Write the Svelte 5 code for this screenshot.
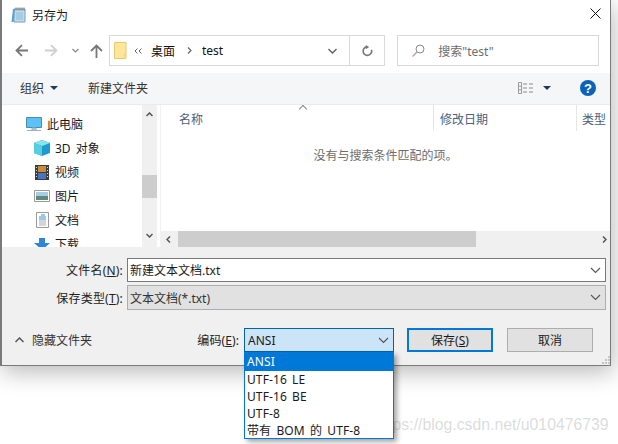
<script>
	const tree = [
		{ label: '3D 对象', icon: 'cube' },
		{ label: '视频', icon: 'film' },
		{ label: '图片', icon: 'pic' },
		{ label: '文档', icon: 'doc' },
		{ label: '下载', icon: 'down' }
	];
	const encodings = ['ANSI', 'UTF-16 LE', 'UTF-16 BE', 'UTF-8', '带有 BOM 的 UTF-8'];
</script>

{#snippet chevron(color)}
	<svg class="chev" width="11" height="7" viewBox="0 0 11 7"><path d="M1 1l4.500 4.500L10 1" fill="none" stroke={color} stroke-width="1.100" /></svg>
{/snippet}

<div class="page">
	<div class="dialog">
		<div class="title">
			<svg width="16" height="18" viewBox="0 0 16 18">
				<path d="M3 3h11v13H3z" fill="#bcdcf0" stroke="#7f9fb5" />
				<path d="M1.500 16l1.500-13" stroke="#5b9fc9" stroke-width="2" />
				<path d="M5 1.500v3M7 1.500v3M9 1.500v3M11 1.500v3M13 1.500v3" stroke="#777" />
				<path d="M5 7h7M5 9h7M5 11h7M5 13h7" stroke="#8fbcd6" />
			</svg>
			<span>另存为</span>
			<svg class="close" width="11" height="11" viewBox="0 0 11 11"><path d="M.500.500l10 10M10.500.500l-10 10" stroke="#111" stroke-width="1" /></svg>
		</div>

		<div class="nav">
			<svg class="arrow" width="13" height="13" viewBox="0 0 13 13"><path d="M13 6.500H2M7 1L1.500 6.500 7 12" fill="none" stroke="#777" stroke-width="1.800" /></svg>
			<svg class="arrow fwd" width="13" height="13" viewBox="0 0 13 13"><path d="M0 6.500h11M6 1l5.500 5.500L6 12" fill="none" stroke="#cfcfcf" stroke-width="1.800" /></svg>
			<svg class="hist" width="7" height="5" viewBox="0 0 7 5"><path d="M.500 1l3 3 3-3" fill="none" stroke="#888" stroke-width="1.200" /></svg>
			<svg class="arrow up" width="13" height="14" viewBox="0 0 13 14"><path d="M6.500 14V2M1 7l5.500-5.500L12 7" fill="none" stroke="#777" stroke-width="1.800" /></svg>
			<div class="address">
				<svg width="13" height="17" viewBox="0 0 13 17"><path d="M.500.500h11.500v16H.500z" fill="#ffe69a" stroke="#e8c968" /><path d="M10 11h2v5.500h-2z" fill="#f4d77f" /></svg>
				<svg class="crumbs" width="8" height="6" viewBox="0 0 8 6"><path d="M3.500.500L1 3l2.500 2.500M7.500.500L5 3l2.500 2.500" fill="none" stroke="#666" /></svg>
				<span class="crumb">桌面</span>
				<svg class="sep" width="5" height="7" viewBox="0 0 5 7"><path d="M1 .500l3 3-3 3" fill="none" stroke="#666" stroke-width="1.200" /></svg>
				<span class="crumb">test</span>
				<span class="spring"></span>
				<span class="addr-drop"><svg width="9" height="6" viewBox="0 0 9 6"><path d="M.500 1l4 4 4-4" fill="none" stroke="#666" stroke-width="1.500" /></svg></span>
				<span class="refresh">
					<svg width="11" height="12" viewBox="0 0 11 12"><path d="M5 1.800a4.300 4.300 0 1 0 4.500 3" fill="none" stroke="#777" stroke-width="1.600" /><path d="M3.800 0l3.400 2-3.400 2.200z" fill="#777" /></svg>
				</span>
			</div>
			<div class="search">
				<svg width="13" height="13" viewBox="0 0 13 13"><circle cx="8" cy="5" r="4" fill="none" stroke="#8b8b8b" /><path d="M5 8l-4.500 4.500" stroke="#c99a84" stroke-width="1.200" /></svg>
				<span>搜索"test"</span>
			</div>
		</div>

		<div class="toolbar">
			<span class="tool">组织</span>
			<span class="caret"></span>
			<span class="tool newfolder">新建文件夹</span>
			<span class="spring"></span>
			<svg width="16" height="12" viewBox="0 0 16 12">
				<path d="M.500.500h3v11h-3zM.500 4.200h3M.500 7.800h3" fill="none" stroke="#9a9a9a" />
				<path d="M5 2h4M11 2h4M5 6h4M11 6h4M5 10h4M11 10h4" stroke="#8a8a8a" />
			</svg>
			<span class="caret view"></span>
			<svg class="help" width="16" height="16" viewBox="0 0 16 16"><circle cx="8" cy="8" r="8" fill="#0a63b8" /><text x="8" y="12.500" text-anchor="middle" class="q">?</text></svg>
		</div>

		<div class="main">
			<div class="tree">
				<div class="tree-rows">
					<div class="row top">
						<svg width="16" height="15" viewBox="0 0 16 15">
							<path d="M.500.500h15v10H.500z" fill="#5cc2f5" stroke="#4a8cb0" />
							<path d="M6 11h4v2H6zM1 13.500h14" stroke="#9ab0bd" fill="#c5d3dc" />
						</svg>
						<span>此电脑</span>
					</div>
					{#each tree as item}
						<div class="row">
							<span class="ico">
								{#if item.icon === 'cube'}
									<svg width="16" height="16" viewBox="0 0 16 16"><path d="M8 0l8 3v10l-8 3-8-3V3z" fill="#1d9bd1" /><path d="M8 0l8 3-8 3-8-3z" fill="#8be4ec" /><path d="M0 3l8 3v10l-8-3z" fill="#55cfe0" /></svg>
								{:else if item.icon === 'film'}
									<svg width="14" height="15" viewBox="0 0 14 15"><path d="M0 0h14v15H0z" fill="#3c3c3c" /><path d="M3 1h8v6H3z" fill="#c98b3a" /><path d="M3 8h8v6H3z" fill="#4676c2" /><path d="M1 2h1v1H1zM1 5h1v1H1zM1 8h1v1H1zM1 11h1v1H1zM12 2h1v1h-1zM12 5h1v1h-1zM12 8h1v1h-1zM12 11h1v1h-1z" fill="#ddd" /></svg>
								{:else if item.icon === 'pic'}
									<svg width="16" height="13" viewBox="0 0 16 13"><path d="M.500.500h15v11H.500z" fill="#fff" stroke="#9a9a9a" /><path d="M2 2h12v4H2z" fill="#a9cde8" /><path d="M2 6h12v4H2z" fill="#5e8a7c" /></svg>
								{:else if item.icon === 'doc'}
									<svg width="13" height="16" viewBox="0 0 13 16"><path d="M.500.500h12v15H.500z" fill="#fff" stroke="#9a9a9a" /><path d="M5 3h4M3 5h7M3 7h7" stroke="#3b8fd0" /><path d="M3 9h7M3 11h7M3 13h7" stroke="#aaa" /></svg>
								{:else}
									<svg width="16" height="12" viewBox="0 0 16 12"><path d="M5 0h6v5h5l-8 7-8-7h5z" fill="#2f86d9" /></svg>
								{/if}
							</span>
							<span>{item.label}</span>
						</div>
					{/each}
				</div>
				<div class="vbar">
					<svg width="7" height="5" viewBox="0 0 7 5"><path d="M.500 4l3-3 3 3" fill="none" stroke="#555" stroke-width="1.500" /></svg>
					<span class="vthumb"></span>
					<svg width="7" height="5" viewBox="0 0 7 5"><path d="M.500 1l3 3 3-3" fill="none" stroke="#555" stroke-width="1.500" /></svg>
				</div>
			</div>
			<div class="files">
				<div class="heads">
					<span class="h name">名称<i class="sort"></i></span>
					<span class="h date">修改日期</span>
					<span class="h type">类型</span>
				</div>
				<p class="empty">没有与搜索条件匹配的项。</p>
				<div class="hbar">
					<svg width="5" height="7" viewBox="0 0 5 7"><path d="M4 .500l-3 3 3 3" fill="none" stroke="#555" stroke-width="1.500" /></svg>
					<span class="hthumb"></span>
					<svg width="5" height="7" viewBox="0 0 5 7"><path d="M1 .500l3 3-3 3" fill="none" stroke="#555" stroke-width="1.500" /></svg>
				</div>
			</div>
		</div>

		<div class="bottom">
			<div class="field">
				<span class="lbl">文件名(<u>N</u>):</span>
				<div class="box name-box"><span>新建文本文档.txt</span>{@render chevron('#555')}</div>
			</div>
			<div class="field second">
				<span class="lbl">保存类型(<u>T</u>):</span>
				<div class="box type-box"><span>文本文档(*.txt)</span>{@render chevron('#555')}</div>
			</div>
			<div class="actions">
				<svg class="hide" width="9" height="6" viewBox="0 0 9 6"><path d="M.500 5l4-4 4 4" fill="none" stroke="#555" stroke-width="1.500" /></svg>
				<span class="hide-label">隐藏文件夹</span>
				<span class="spring"></span>
				<span class="enc-label">编码(<u>E</u>):</span>
				<div class="encoding">
					<div class="box enc-box"><span>ANSI</span>{@render chevron('#555')}</div>
					<ul class="menu">
						{#each encodings as enc, i}
							<li class:active={i === 0}>{enc}</li>
						{/each}
					</ul>
				</div>
				<button class="btn primary">保存(<u>S</u>)</button>
				<button class="btn cancel">取消</button>
			</div>
			<svg class="grip" width="9" height="9" viewBox="0 0 9 9"><path d="M7 0h2v2H7zM4 3h2v2H4zM7 3h2v2H7zM1 6h2v2H1zM4 6h2v2H4zM7 6h2v2H7z" fill="#c4c4c4" /></svg>
		</div>
	</div>
	<span class="watermark">https://blog.csdn.net/u010476739</span>
</div>

<style>
	:global(body) {
		margin: 0;
		background: #fff;
		overflow: hidden;
	}

	.page {
		position: relative;
		width: 618px;
		height: 444px;
		font-family: "Noto Sans", "Noto Sans CJK SC", sans-serif;
		font-size: 12px;
		color: #1a1a1a;
		overflow: hidden;
	}

	.dialog {
		width: 611px;
		height: 366px;
		box-sizing: border-box;
		border-left: 2px solid #7a7a7a;
		border-right: 1px solid #7a7a7a;
		border-bottom: 1px solid #7a7a7a;
		background: #fff;
		box-shadow: 2px 6px 22px rgba(0, 0, 0, 0.28);
		display: flex;
		flex-direction: column;
	}

	.spring {
		flex: 1;
	}

	.title {
		height: 30px;
		display: flex;
		align-items: center;
		gap: 5px;
		padding: 0 9px;
		flex: none;
		font-size: 12px;
	}

	.close {
		margin-left: auto;
		margin-top: -3px;
	}

	.nav {
		height: 43px;
		flex: none;
		display: flex;
		align-items: center;
		padding: 0 11px 2px 13px;
		box-sizing: border-box;
	}

	.arrow.fwd {
		margin-left: 17px;
	}

	.hist {
		margin-left: 14px;
	}

	.arrow.up {
		margin-left: 11px;
	}

	.address {
		margin-left: 6px;
		width: 277px;
		height: 31px;
		box-sizing: border-box;
		border: 1px solid #d9d9d9;
		display: flex;
		align-items: center;
		padding-left: 4px;
	}

	.crumbs {
		margin-left: 7px;
	}

	.crumb {
		margin-left: 9px;
		color: #111;
	}

	.sep {
		margin-left: 12px;
	}

	.sep + .crumb {
		margin-left: 10px;
	}

	.addr-drop {
		width: 35px;
		height: 100%;
		display: flex;
		align-items: center;
		justify-content: center;
		box-sizing: border-box;
		border-right: 1px solid #d9d9d9;
	}

	.refresh {
		width: 34px;
		display: flex;
		justify-content: center;
	}

	.search {
		margin-left: 12px;
		width: 202px;
		height: 31px;
		box-sizing: border-box;
		border: 1px solid #d9d9d9;
		display: flex;
		align-items: center;
		padding-left: 14px;
		gap: 13px;
		color: #6d6d6d;
	}

	.toolbar {
		height: 32px;
		flex: none;
		background: #f5f6f7;
		border-bottom: 1px solid #e9ebee;
		box-sizing: border-box;
		display: flex;
		align-items: center;
		padding: 0 14px 2px 18px;
	}

	.tool {
		color: #333;
	}

	.caret {
		width: 0;
		height: 0;
		margin-left: 6px;
		border-left: 4px solid transparent;
		border-right: 4px solid transparent;
		border-top: 4px solid #1c3a5e;
	}

	.newfolder {
		margin-left: 30px;
	}

	.caret.view {
		margin-left: 9px;
		margin-right: 29px;
	}

	.q {
		font: 700 13px "Liberation Sans", sans-serif;
		fill: #fff;
	}

	.main {
		height: 142px;
		flex: none;
		display: flex;
		overflow: hidden;
	}

	.tree {
		width: 155px;
		flex: none;
		display: flex;
	}

	.tree-rows {
		flex: 1;
		overflow: hidden;
		padding-left: 24px;
	}

	.row {
		height: 24px;
		display: flex;
		align-items: center;
		gap: 5px;
		padding-left: 8px;
		white-space: nowrap;
		word-spacing: 2px;
	}

	.row.top {
		padding-left: 0;
		gap: 5px;
		margin-top: 7px;
	}

	.ico {
		width: 16px;
		display: flex;
		justify-content: center;
	}

	.vbar {
		width: 15px;
		background: #f0f0f0;
		display: flex;
		flex-direction: column;
		align-items: center;
		padding: 7px 0 9px;
		box-sizing: border-box;
		position: relative;
		justify-content: space-between;
	}

	.vthumb {
		position: absolute;
		left: 0;
		top: 70px;
		width: 15px;
		height: 23px;
		background: #cdcdcd;
	}

	.files {
		flex: 1;
		margin-left: 3px;
		border-left: 1px solid #f2f2f2;
		display: flex;
		flex-direction: column;
		min-width: 0;
	}

	.heads {
		height: 26px;
		display: flex;
		flex: none;
		color: #4c607a;
	}

	.h {
		box-sizing: border-box;
		padding-top: 5px;
		border-right: 1px solid #e5e5e5;
		position: relative;
	}

	.name {
		width: 273px;
		padding-left: 18px;
	}

	.date {
		width: 143px;
		padding-left: 6px;
	}

	.type {
		flex: 1;
		padding-left: 5px;
		border-right: 0;
		white-space: nowrap;
		overflow: hidden;
	}

	.sort {
		position: absolute;
		left: 139px;
		top: 1px;
		width: 5px;
		height: 5px;
		border-left: 1px solid #888;
		border-top: 1px solid #888;
		transform: rotate(45deg);
	}

	.empty {
		flex: 1;
		margin: 0;
		padding-top: 15px;
		text-align: center;
		color: #6d6d6d;
	}

	.hbar {
		height: 16px;
		flex: none;
		background: #f0f0f0;
		display: flex;
		align-items: center;
		padding: 0 3px 0 5px;
	}

	.hthumb {
		margin-left: 7px;
		margin-right: auto;
		width: 298px;
		height: 16px;
		background: #cdcdcd;
	}

	.bottom {
		flex: 1;
		background: #f0f0f0;
		padding-top: 11px;
		position: relative;
	}

	.field {
		display: flex;
		align-items: center;
		height: 24px;
	}

	.field.second {
		margin-top: 3px;
		height: 25px;
	}

	.lbl {
		width: 122px;
		text-align: right;
		flex: none;
		padding-right: 1px;
		box-sizing: border-box;
		color: #222;
		letter-spacing: 0.2px;
	}

	.box {
		box-sizing: border-box;
		height: 100%;
		display: flex;
		align-items: center;
		justify-content: space-between;
		padding: 0 3px 0 2px;
	}

	.name-box {
		width: 479px;
		margin-left: 3px;
		background: #fff;
		border: 1px solid #7a7a7a;
	}

	.type-box {
		width: 479px;
		margin-left: 3px;
		background: #e1e1e1;
		border: 1px solid #adadad;
		color: #333;
	}

	.chev {
		margin-right: 1px;
	}

	.actions {
		display: flex;
		align-items: center;
		height: 24px;
		margin-top: 18px;
		padding: 0 17px 0 13px;
	}

	.hide-label {
		margin-left: 8px;
		color: #333;
	}

	.enc-label {
		color: #222;
		letter-spacing: 0.1px;
	}

	.encoding {
		position: relative;
		width: 150px;
		height: 24px;
		margin-left: 5px;
	}

	.enc-box {
		background: #cce4f7;
		border: 1px solid #0063b1;
		padding-left: 3px;
	}

	.menu {
		position: absolute;
		left: 0;
		top: 24px;
		width: 100%;
		margin: 0;
		padding: 0;
		list-style: none;
		box-sizing: border-box;
		background: #fff;
		border: 1px solid #0078d7;
		border-top: 0;
		height: 87px;
		box-shadow: 3px 3px 5px rgba(0, 0, 0, 0.35);
		z-index: 2;
	}

	.menu li {
		height: 17px;
		line-height: 17px;
		padding-left: 2px;
		white-space: nowrap;
		word-spacing: 2px;
		letter-spacing: 0.1px;
	}

	.menu li.active {
		height: 19px;
		line-height: 20px;
		background: #0078d7;
		color: #fff;
	}

	.btn {
		font: inherit;
		width: 86px;
		height: 24px;
		padding: 0;
		box-sizing: border-box;
		background: #e1e1e1;
		color: #1a1a1a;
		border: 1px solid #adadad;
	}

	.primary {
		margin-left: 13px;
		border: 2px solid #0078d7;
	}

	.cancel {
		margin-left: 14px;
	}

	.grip {
		position: absolute;
		right: 0;
		bottom: 0;
	}

	.watermark {
		position: absolute;
		left: 375px;
		top: 416px;
		font: 15.800px "Liberation Sans", sans-serif;
		color: rgba(170, 170, 170, 0.42);
		white-space: nowrap;
	}
</style>
